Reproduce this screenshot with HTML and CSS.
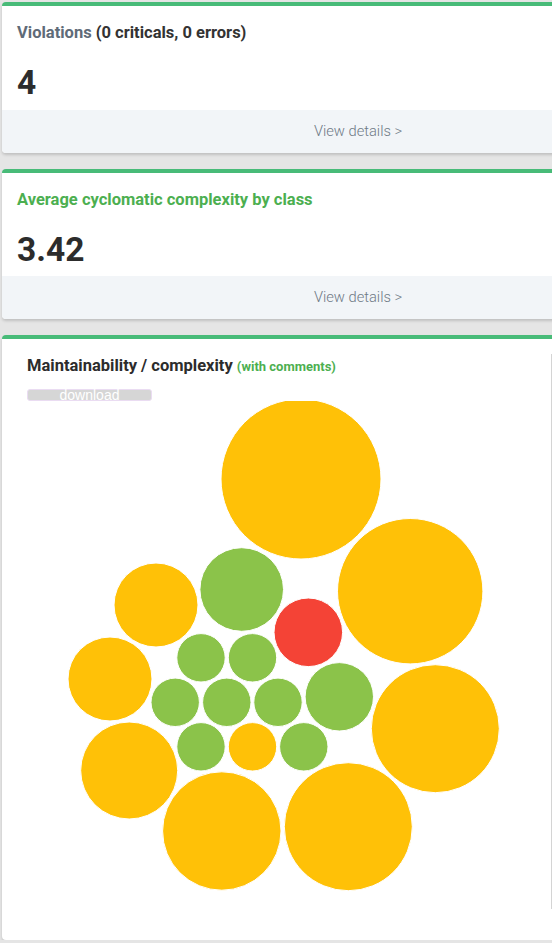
FILE: index.html
```html
<!DOCTYPE html>
<html>
<head>
<meta charset="utf-8">
<link rel="stylesheet" href="styles.css">
</head>
<body>
<div class="page">
  <div class="card">
    <div class="card-body">
      <div class="card-title"><span class="muted">Violations</span> (0 criticals, 0 errors)</div>
      <div class="card-value">4</div>
    </div>
    <div class="card-footer">View details &gt;</div>
  </div>

  <div class="card">
    <div class="card-body second">
      <div class="card-title green">Average cyclomatic complexity by class</div>
      <div class="card-value">3.42</div>
    </div>
    <div class="card-footer">View details &gt;</div>
  </div>

  <div class="card chart-card">
    <div class="panel">
      <div class="panel-title">Maintainability / complexity <span class="sub">(with comments)</span></div>
      <div class="download">download</div>
      <svg class="bubbles" width="520" height="502" viewBox="27 401 520 502">
        <g stroke="#ffffff" stroke-width="1">
          <circle cx="301" cy="479" r="80" fill="#FFC107"/>
          <circle cx="410.2" cy="591.2" r="72.7" fill="#FFC107"/>
          <circle cx="156" cy="605" r="42" fill="#FFC107"/>
          <circle cx="241.7" cy="589.5" r="41.8" fill="#8BC34A"/>
          <circle cx="308.3" cy="632.3" r="34.3" fill="#F44336"/>
          <circle cx="110" cy="679" r="42" fill="#FFC107"/>
          <circle cx="201" cy="657.8" r="24.2" fill="#8BC34A"/>
          <circle cx="252.5" cy="657.8" r="24.2" fill="#8BC34A"/>
          <circle cx="175.2" cy="702.3" r="24.2" fill="#8BC34A"/>
          <circle cx="226.8" cy="702.3" r="24.2" fill="#8BC34A"/>
          <circle cx="278" cy="702.3" r="24.2" fill="#8BC34A"/>
          <circle cx="339.3" cy="696.8" r="34.2" fill="#8BC34A"/>
          <circle cx="435.3" cy="728.7" r="64" fill="#FFC107"/>
          <circle cx="201" cy="746.8" r="24.2" fill="#8BC34A"/>
          <circle cx="252.5" cy="746.8" r="24.2" fill="#FFC107"/>
          <circle cx="303.8" cy="746.8" r="24.2" fill="#8BC34A"/>
          <circle cx="129.2" cy="770.5" r="48.5" fill="#FFC107"/>
          <circle cx="221.8" cy="831" r="59.2" fill="#FFC107"/>
          <circle cx="348.3" cy="826.7" r="64" fill="#FFC107"/>
        </g>
      </svg>
    </div>
  </div>
</div>
</body>
</html>
```

FILE: styles.css
```css
html, body {
  margin: 0;
  padding: 0;
  overflow: hidden;
  background: #e5e5e5;
}

body {
  font-family: Roboto, "Noto Sans", "Liberation Sans", sans-serif;
  color: #333333;
}

.page {
  padding: 2px 0 0 2px;
  display: flex;
  flex-direction: column;
  gap: 16px;
  width: 712px;
}

.card {
  background: #ffffff;
  border-top: 4px solid #48bb78;
  border-radius: 4px;
  box-shadow: 0 2px 3px rgba(0, 0, 0, 0.16);
  overflow: hidden;
}

.card-body {
  padding: 17px 15px 0 15px;
  height: 104px;
  box-sizing: border-box;
}

.card-body.second {
  height: 103px;
}

.card-title {
  font-size: 16.5px;
  line-height: 20px;
  font-weight: 700;
  color: #333333;
}

.card-title .muted {
  color: #5f6b78;
}

.card-title.green {
  color: #4caf50;
}

.card-value {
  margin-top: 20px;
  font-size: 33.5px;
  line-height: 40px;
  font-weight: 700;
  color: #2c2c2c;
}

.card-footer {
  height: 43px;
  background: #f2f5f8;
  text-align: center;
  font-size: 14.7px;
  font-weight: 300;
  line-height: 43px;
  color: #6f7a86;
}

.chart-card {
  padding: 15px 0 31px 15px;
}

.panel {
  width: 535px;
  height: 555px;
  box-sizing: border-box;
  border-right: 1px solid #d4d4d4;
  padding: 2px 0 0 10px;
}

.panel-title {
  font-size: 16.5px;
  line-height: 20px;
  font-weight: 700;
  color: #2c2c2c;
}

.panel-title .sub {
  font-size: 13px;
  color: #4caf50;
}

.download {
  margin-top: 12px;
  width: 125px;
  height: 12px;
  box-sizing: border-box;
  background: #d6d6d6;
  border: 1px solid #eadcf2;
  border-radius: 3px;
  color: #ffffff;
  font-family: "Liberation Sans", Arial, sans-serif;
  font-size: 14px;
  line-height: 10px;
  text-align: center;
}

.bubbles {
  display: block;
}
```
